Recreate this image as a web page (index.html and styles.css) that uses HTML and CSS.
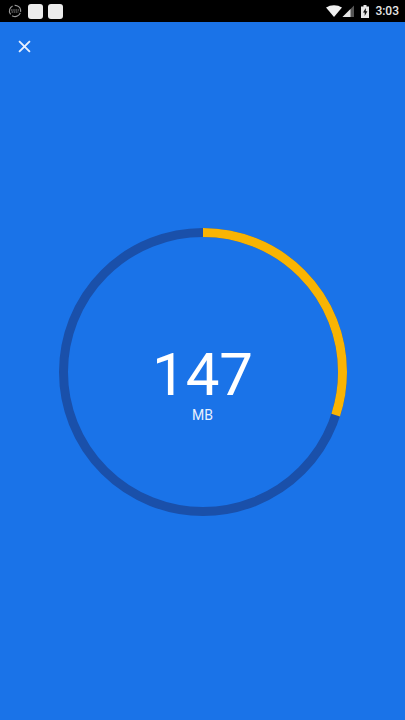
FILE: index.html
```
<!DOCTYPE html>
<html lang="en">
<head>
  <meta charset="UTF-8" />
  <meta name="viewport" content="width=device-width, initial-scale=1.0"/>
  <title>Data usage</title>
  <link rel="stylesheet" href="styles.css">
</head>
<body>
  <div class="status-bar">
    <div class="notifications">
      <svg class="sync-icon" viewBox="0 0 14 14" width="14" height="14">
        <circle cx="7" cy="7" r="5.6" fill="none" stroke="#999" stroke-width="1.2" stroke-dasharray="9.7 2" transform="rotate(20 7 7)"/>
        <path d="M3 6h8M3.5 8h7" stroke="#888" stroke-width="1.2" stroke-dasharray="1.6 .6"/>
      </svg>
      <span class="app-dot"></span>
      <span class="app-dot"></span>
    </div>
    <div class="system">
      <svg viewBox="0 0 31 14" width="31" height="14">
        <path d="M0 3.6C4.5 .3 11.5 .3 16 3.6L8 13z" fill="#f1f1f1"/>
        <path d="M28 1.5V13H16.5z" fill="#555"/>
        <path d="M24.5 5V13H16.5z" fill="#e6e6e6"/>
      </svg>
      <svg class="battery" viewBox="0 0 8 13" width="8" height="13">
        <path d="M2.5 0h3v1.5H8V13H0V1.5h2.5z" fill="#e8e8e8"/>
        <path d="M4.8 3L2 7.5h1.7V11l2.7-4.800H4.8z" fill="#111"/>
      </svg>
      <span class="clock">3:03</span>
    </div>
  </div>

  <main class="screen">
    <header class="toolbar">
      <button class="close" type="button" aria-label="Close">
        <svg viewBox="0 0 12 12" width="13" height="13">
          <path d="M1 1l10 10M11 1L1 11" stroke="#e8f0fe" stroke-width="1.7" fill="none"/>
        </svg>
      </button>
    </header>

    <div class="dial-area">
      <div class="dial">
        <svg class="ring" viewBox="0 0 288 288">
          <circle class="track" cx="144" cy="144" r="139.5"/>
          <circle class="progress" cx="144" cy="144" r="139.5" pathLength="100" stroke-dasharray="30 100" transform="rotate(-90 144 144)"/>
        </svg>
        <div class="reading">
          <span class="amount">147</span>
          <span class="unit">MB</span>
        </div>
      </div>
    </div>
  </main>
</body>
</html>
```

FILE: styles.css
```
* {
  box-sizing: border-box;
}

body {
  margin: 0;
  min-height: 100vh;
  display: flex;
  flex-direction: column;
  background: #1a73e8;
  color: white;
  font-family: Roboto, sans-serif;
}

svg {
  display: block;
}

.status-bar {
  height: 22px;
  padding: 0 6px 0 8px;
  display: flex;
  justify-content: space-between;
  align-items: center;
  background: #000;
}

.notifications {
  display: flex;
  align-items: center;
  gap: 6px;
}

.app-dot {
  width: 15px;
  height: 15px;
  border-radius: 3px;
  background: #ebebeb;
}

.app-dot + .app-dot {
  margin-left: -1px;
}

.system {
  display: flex;
  align-items: center;
}

.battery {
  margin: 0 6px 0 4px;
}

.clock {
  font-size: 12px;
  line-height: 16px;
  font-weight: 500;
  color: #e8e8e8;
}

.screen {
  flex: 1;
  display: flex;
  flex-direction: column;
}

.toolbar {
  height: 48px;
  display: flex;
  align-items: center;
}

.close {
  width: 48px;
  height: 48px;
  padding: 0;
  border: none;
  background: none;
  display: flex;
  justify-content: center;
  align-items: center;
  cursor: pointer;
}

.dial-area {
  flex: 1;
  display: flex;
  justify-content: center;
  align-items: center;
  padding: 0 16px 46px;
}

.dial {
  width: 100%;
  max-width: 288px;
  display: grid;
}

.ring,
.reading {
  grid-area: 1 / 1;
}

.ring {
  width: 100%;
}

.track,
.progress {
  fill: none;
  stroke-width: 9;
}

.track {
  stroke: #1a50aa;
}

.progress {
  stroke: #f9b403;
}

.reading {
  display: flex;
  flex-direction: column;
  justify-content: center;
  align-items: center;
  padding-top: 22px;
}

.amount {
  font-size: 60px;
  line-height: 64px;
}

.unit {
  font-size: 14px;
  line-height: 16px;
  color: #e8f0fe;
}
```
